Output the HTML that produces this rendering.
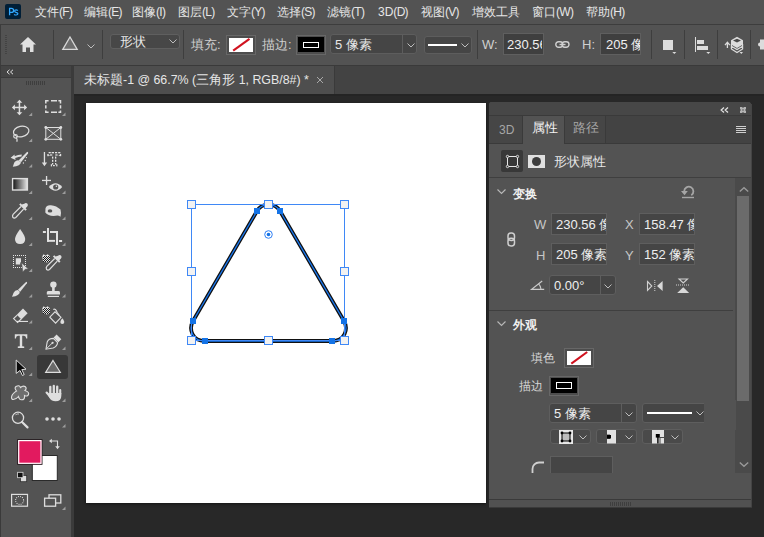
<!DOCTYPE html>
<html><head><meta charset="utf-8">
<style>
*{margin:0;padding:0;box-sizing:border-box}
html,body{width:764px;height:537px;overflow:hidden;background:#282828;font-family:"Liberation Sans",sans-serif;color:#dcdcdc;font-size:12px}
.a{position:absolute}
.t{position:absolute;white-space:nowrap;line-height:1}
svg{position:absolute;overflow:visible}
</style></head><body>

<!-- MENU BAR -->
<div class="a" style="left:0;top:0;width:764px;height:24px;background:#535353"></div>
<div class="a" style="left:0;top:24px;width:764px;height:1px;background:#3d3d3d"></div>
<div class="a" style="left:5px;top:4px;width:16px;height:15px;background:#001e36;border-radius:2px"></div>
<svg style="left:0;top:0" width="24" height="24" viewBox="0 0 24 24"><path d="M9.6 15.2 V8.4 H11.4 Q13.6 8.4 13.6 10.4 Q13.6 12.4 11.4 12.4 H9.6" fill="none" stroke="#31a8ff" stroke-width="1.3"/><path d="M17.8 10.6 Q17.2 9.9 16.1 9.9 Q14.6 9.9 14.6 11 Q14.6 11.9 16.1 12.3 Q17.9 12.7 17.9 13.8 Q17.9 15 16.1 15 Q14.8 15 14.1 14.3" fill="none" stroke="#31a8ff" stroke-width="1.2"/></svg>
<div class="t" id="menu" style="left:35px;top:6px;font-size:12px;color:#e6e6e6">
<span class="t" style="left:0">文件<span style="letter-spacing:-0.7px">(F)</span></span>
<span class="t" style="left:49px">编辑<span style="letter-spacing:-0.7px">(E)</span></span>
<span class="t" style="left:97px">图像<span style="letter-spacing:-0.7px">(I)</span></span>
<span class="t" style="left:143px">图层<span style="letter-spacing:-0.7px">(L)</span></span>
<span class="t" style="left:192px">文字<span style="letter-spacing:-0.7px">(Y)</span></span>
<span class="t" style="left:242px">选择<span style="letter-spacing:-0.7px">(S)</span></span>
<span class="t" style="left:292px">滤镜<span style="letter-spacing:-0.7px">(T)</span></span>
<span class="t" style="left:343px">3D<span style="letter-spacing:-0.7px">(D)</span></span>
<span class="t" style="left:386px">视图<span style="letter-spacing:-0.7px">(V)</span></span>
<span class="t" style="left:437px">增效工具</span>
<span class="t" style="left:497px">窗口<span style="letter-spacing:-0.7px">(W)</span></span>
<span class="t" style="left:551px">帮助<span style="letter-spacing:-0.7px">(H)</span></span>
</div>

<!-- OPTIONS BAR -->
<div class="a" style="left:0;top:25px;width:764px;height:40px;background:#535353"></div>
<div class="a" style="left:0;top:65px;width:764px;height:1px;background:#3a3a3a"></div>
<div class="a" style="left:0;top:25px;width:1px;height:40px;background:#3c3c3c"></div>

<!-- grip -->
<div class="a" style="left:5px;top:35px;width:2px;height:20px;background:repeating-linear-gradient(#434343 0 1px,transparent 1px 2px)"></div>
<!-- home -->
<svg style="left:20px;top:37px" width="16" height="15" viewBox="0 0 16 15"><path d="M8 0 L16 7.5 L13.5 7.5 L13.5 15 L10 15 L10 10.5 L6 10.5 L6 15 L2.5 15 L2.5 7.5 L0 7.5 Z" fill="#e0e0e0"/></svg>
<div class="a" style="left:53px;top:30px;width:1px;height:29px;background:#3e3e3e"></div>
<!-- triangle tool -->
<svg style="left:62px;top:36px" width="16" height="14" viewBox="0 0 16 14"><path d="M8 1 L15.2 13.3 L0.8 13.3 Z" fill="#6e6e6e" stroke="#d8d8d8" stroke-width="1.3" stroke-linejoin="miter"/></svg>
<svg style="left:87px;top:44px" width="8" height="5" viewBox="0 0 8 5"><path d="M0.5 0.5 L4 4 L7.5 0.5" fill="none" stroke="#bdbdbd" stroke-width="1"/></svg>
<div class="a" style="left:102px;top:30px;width:1px;height:29px;background:#3e3e3e"></div>
<!-- shape dropdown -->
<div class="a" style="left:110px;top:34px;width:70px;height:15px;background:#474747;border:1px solid #5f5f5f;border-radius:3px"></div>
<div class="t" style="left:120px;top:35px;font-size:13px;color:#e8e8e8">形状</div>
<svg style="left:169px;top:39px" width="8" height="5" viewBox="0 0 8 5"><path d="M0.5 0.5 L4 4 L7.5 0.5" fill="none" stroke="#bdbdbd" stroke-width="1"/></svg>
<div class="a" style="left:183px;top:30px;width:1px;height:29px;background:#3e3e3e"></div>
<!-- fill -->
<div class="t" style="left:191px;top:38px;font-size:13px;color:#cfcfcf">填充:</div>
<div class="a" style="left:226px;top:35px;width:30px;height:20px;border:1px solid #676767;background:#4d4d4d"></div>
<div class="a" style="left:229px;top:38px;width:24px;height:14px;background:#fff"></div>
<svg style="left:229px;top:38px" width="24" height="14" viewBox="0 0 24 14"><path d="M4.2 12.6 L20.5 0.9" stroke="#d0121f" stroke-width="2.1"/></svg>
<!-- stroke -->
<div class="t" style="left:262px;top:38px;font-size:13px;color:#cfcfcf">描边:</div>
<div class="a" style="left:296px;top:35px;width:30px;height:20px;border:1px solid #676767;background:#4d4d4d"></div>
<div class="a" style="left:298px;top:37px;width:26px;height:15px;background:#000"></div>
<div class="a" style="left:303px;top:42px;width:16px;height:6px;border:1.5px solid #fff"></div>
<!-- stroke size -->
<div class="a" style="left:330px;top:34px;width:87px;height:20px;background:#454545;border:1px solid #5d5d5d;border-radius:3px"></div>
<div class="a" style="left:402px;top:35px;width:1px;height:18px;background:#5d5d5d"></div>
<div class="t" style="left:335px;top:38px;font-size:13px;color:#e8e8e8">5 像素</div>
<svg style="left:407px;top:43px" width="8" height="5" viewBox="0 0 8 5"><path d="M0.5 0.5 L4 4 L7.5 0.5" fill="none" stroke="#bdbdbd" stroke-width="1"/></svg>
<!-- line style -->
<div class="a" style="left:424px;top:36px;width:48px;height:18px;background:#454545;border:1px solid #5d5d5d;border-radius:3px"></div>
<div class="a" style="left:428px;top:44px;width:29px;height:2px;background:#fff"></div>
<svg style="left:461px;top:43px" width="8" height="5" viewBox="0 0 8 5"><path d="M0.5 0.5 L4 4 L7.5 0.5" fill="none" stroke="#bdbdbd" stroke-width="1"/></svg>
<div class="a" style="left:477px;top:30px;width:1px;height:29px;background:#3e3e3e"></div>
<!-- W -->
<div class="t" style="left:482px;top:38px;font-size:13px;color:#cfcfcf">W:</div>
<div class="a" style="left:503px;top:33px;width:41px;height:22px;background:#3f3f3f;border:1px solid #5f5f5f"><div class="a" style="left:0;top:0;width:38px;height:20px;overflow:hidden"><div class="t" style="left:3px;top:4px;font-size:13px;color:#f0f0f0">230.56</div></div></div>
<!-- link -->
<svg style="left:555px;top:41px" width="15" height="7" viewBox="0 0 15 7"><rect x="0.8" y="0.8" width="7" height="5.4" rx="2.7" fill="none" stroke="#d0d0d0" stroke-width="1.4"/><rect x="7" y="0.8" width="7" height="5.4" rx="2.7" fill="none" stroke="#d0d0d0" stroke-width="1.4"/><path d="M4.5 3.5 H10.5" stroke="#d0d0d0" stroke-width="1.4"/></svg>
<!-- H -->
<div class="t" style="left:582px;top:38px;font-size:13px;color:#cfcfcf">H:</div>
<div class="a" style="left:600px;top:33px;width:41px;height:22px;background:#3f3f3f;border:1px solid #5f5f5f"><div class="a" style="left:0;top:0;width:39px;height:20px;overflow:hidden"><div class="t" style="left:5px;top:4px;font-size:13px;color:#f0f0f0">205 像素</div></div></div>
<div class="a" style="left:651px;top:30px;width:1px;height:29px;background:#3e3e3e"></div>
<!-- square icon -->
<div class="a" style="left:663px;top:40px;width:10px;height:10px;background:#dcdcdc"></div>
<svg style="left:672px;top:52px" width="5" height="3" viewBox="0 0 5 3"><path d="M0.3 0 H4.3 L2.3 2 Z" fill="#dcdcdc"/></svg>
<div class="a" style="left:684px;top:30px;width:1px;height:29px;background:#3e3e3e"></div>
<!-- align -->
<div class="a" style="left:695px;top:37px;width:1px;height:15px;background:#dcdcdc"></div>
<div class="a" style="left:697px;top:40px;width:7px;height:4px;background:#dcdcdc"></div>
<div class="a" style="left:697px;top:46px;width:11px;height:4px;background:#dcdcdc"></div>
<svg style="left:706px;top:52px" width="5" height="3" viewBox="0 0 5 3"><path d="M0.3 0 H4.3 L2.3 2 Z" fill="#dcdcdc"/></svg>
<div class="a" style="left:717px;top:30px;width:1px;height:29px;background:#3e3e3e"></div>
<!-- arrange layers -->
<svg style="left:715px;top:30px" width="49" height="30" viewBox="715 30 49 30">
<path d="M727.4 48 V43.2 M725 45.2 L727.4 42.2 L729.8 45.2" fill="none" stroke="#dcdcdc" stroke-width="1.3"/>
<path d="M737 36.8 L743 40.3 V44.5 L737 48 L731 44.5 V40.3 Z" fill="#dcdcdc"/>
<path d="M737 38.8 L741 40.6 L737 42.4 L733 40.6 Z" fill="#4a4a4a"/>
<path d="M731.4 46.2 L737 49.5 L742.6 46.2 M731.4 49 L737 52.5 L742.6 49 M731.4 44 V49.2 M742.6 44 V49.2" fill="none" stroke="#dcdcdc" stroke-width="1.2"/>
<path d="M739.6 52 H743 L741.3 54 Z" fill="#dcdcdc"/>
</svg>
<div class="a" style="left:750px;top:30px;width:1px;height:29px;background:#3e3e3e"></div>
<svg style="left:758px;top:38px" width="6" height="13" viewBox="0 0 6 13"><path d="M2 1.5 H6 V11.5 H2 V8.5 Q0 8.5 0 6.5 Q0 4.5 2 4.5 Z" fill="#dcdcdc"/></svg>

<!-- LEFT TOOL PANEL -->
<div class="a" style="left:0;top:66px;width:71px;height:471px;background:#535353;border-left:1px solid #3a3a3a"></div>
<div class="a" style="left:0;top:66px;width:71px;height:11px;background:#444444;border-left:1px solid #3a3a3a"></div>
<div class="a" style="left:0;top:77px;width:71px;height:1px;background:#3a3a3a"></div>
<div class="a" style="left:71px;top:66px;width:3px;height:471px;background:#3b3b3b"></div>
<svg style="left:6px;top:69px" width="8" height="6" viewBox="0 0 8 6"><path d="M3.5 0.8 L1 3 L3.5 5.2 M7 0.8 L4.5 3 L7 5.2" fill="none" stroke="#e0e0e0" stroke-width="1"/></svg>
<div class="a" style="left:26px;top:81px;width:19px;height:4px;background:repeating-linear-gradient(90deg,#3e3e3e 0 1px,transparent 1px 2px)"></div>

<!-- TAB STRIP -->
<div class="a" style="left:74px;top:66px;width:690px;height:28px;background:#434343"></div>
<div class="a" style="left:74px;top:66px;width:261px;height:28px;background:#4e4e4e;border-right:1px solid #3a3a3a"></div>
<div class="t" style="left:84px;top:73px;font-size:13px;color:#e6e6e6">未标题<span style="font-size:12.4px">-1 @ 66.7% (</span>三角形<span style="font-size:12.4px"> 1, RGB/8#) *</span></div>
<svg style="left:317px;top:77px" width="6" height="6" viewBox="0 0 6 6"><path d="M0 0 L6 6 M6 0 L0 6" stroke="#a8a8a8" stroke-width="1"/></svg>
<div class="a" style="left:74px;top:94px;width:690px;height:2px;background:#242424"></div>

<!-- CANVAS -->
<div class="a" style="left:86px;top:103px;width:400px;height:400px;background:#fff;box-shadow:0 1px 3px rgba(0,0,0,0.5)"></div>

<!-- DOCUMENT SHAPE -->
<svg style="left:0;top:0" width="764" height="537" viewBox="0 0 764 537">
<path d="M257 211 L193 321 C188.5 329 192 341 205 341 L332 341 C345 341 348.5 329 344 321 L280 211 C275 202.5 262 202.5 257 211 Z" fill="none" stroke="#111" stroke-width="3.8"/>
<path d="M257 211 L193 321 C188.5 329 192 341 205 341 L332 341 C345 341 348.5 329 344 321 L280 211 C275 202.5 262 202.5 257 211 Z" fill="none" stroke="#1a78f0" stroke-width="1.3"/>
<rect x="191.5" y="204.5" width="153" height="136" fill="none" stroke="#3f88f6" stroke-width="1"/>
<g fill="#f2f2f2" stroke="#3f88f6" stroke-width="1">
<rect x="187.5" y="200.5" width="8" height="8"/><rect x="264.5" y="200.5" width="8" height="8"/><rect x="340.5" y="200.5" width="8" height="8"/>
<rect x="187.5" y="267.5" width="8" height="8"/><rect x="340.5" y="267.5" width="8" height="8"/>
<rect x="187.5" y="336.5" width="8" height="8"/><rect x="264.5" y="336.5" width="8" height="8"/><rect x="340.5" y="336.5" width="8" height="8"/>
</g>
<g fill="#1473e6">
<rect x="254" y="208" width="6" height="6"/><rect x="277" y="208" width="6" height="6"/>
<rect x="190" y="318" width="6" height="6"/><rect x="341" y="318" width="6" height="6"/>
<rect x="202" y="338" width="6" height="6"/><rect x="329" y="338" width="6" height="6"/>
</g>
<circle cx="268.5" cy="234.5" r="5.5" fill="#fff" opacity="0.9"/>
<circle cx="268.5" cy="234.5" r="3.8" fill="none" stroke="#2f7ff5" stroke-width="1"/>
<circle cx="268.5" cy="234.5" r="1.8" fill="#1473e6"/>
</svg>

<!-- PROPERTIES PANEL -->
<div class="a" style="left:489px;top:102px;width:262px;height:405px;background:#535353;border-radius:3px 3px 0 0;overflow:hidden">
  <div class="a" style="left:0;top:0;width:263px;height:13px;background:#474747"></div>
  <div class="a" style="left:0;top:13px;width:263px;height:1px;background:#3a3a3a"></div>
  <div class="a" style="left:0;top:14px;width:263px;height:27px;background:#434343"></div>
  <div class="a" style="left:0;top:14px;width:33px;height:27px;background:#464646"></div>
  <div class="a" style="left:33px;top:14px;width:1px;height:27px;background:#3a3a3a"></div>
  <div class="a" style="left:34px;top:14px;width:41px;height:28px;background:#535353"></div>
  <div class="a" style="left:75px;top:14px;width:1px;height:27px;background:#3a3a3a"></div>
  <div class="a" style="left:76px;top:14px;width:40px;height:27px;background:#464646"></div>
  <div class="a" style="left:116px;top:14px;width:1px;height:27px;background:#3a3a3a"></div>
  <div class="a" style="left:0;top:41px;width:34px;height:1px;background:#3a3a3a"></div>
  <div class="a" style="left:75px;top:41px;width:188px;height:1px;background:#3a3a3a"></div>
  <div class="t" style="left:10px;top:122px"></div>
</div>
<svg style="left:720px;top:107px" width="9" height="6" viewBox="0 0 9 6"><path d="M4 0.5 L1.2 3 L4 5.5 M8 0.5 L5.2 3 L8 5.5" fill="none" stroke="#e0e0e0" stroke-width="1.3"/></svg>
<svg style="left:740px;top:107px" width="6" height="6" viewBox="0 0 6 6"><path d="M0 0 H2 L3 1 L4 0 H6 V2 L5 3 L6 4 V6 H4 L3 5 L2 6 H0 V4 L1 3 L0 2 Z" fill="#b4b4b4"/><rect x="2" y="2" width="2" height="2" fill="#8a8a8a"/></svg>
<div class="t" style="left:499px;top:124px;font-size:12px;color:#a6a6a6">3D</div>
<div class="t" style="left:532px;top:122px;font-size:12.5px;color:#f4f4f4">属性</div>
<div class="t" style="left:573px;top:122px;font-size:12.5px;color:#a6a6a6">路径</div>
<div class="a" style="left:736px;top:126px;width:10px;height:1px;background:#cfcfcf"></div><div class="a" style="left:736px;top:128px;width:10px;height:1px;background:#cfcfcf"></div><div class="a" style="left:736px;top:130px;width:10px;height:1px;background:#cfcfcf"></div><div class="a" style="left:736px;top:132px;width:10px;height:1px;background:#cfcfcf"></div>

<div class="a" style="left:501px;top:150px;width:22px;height:22px;background:#383838;border-radius:2px"></div>
<svg style="left:506px;top:155px" width="13" height="13" viewBox="0 0 13 13"><rect x="1.5" y="1.5" width="10" height="10" fill="none" stroke="#e6e6e6" stroke-width="1"/><g fill="#383838" stroke="#e6e6e6" stroke-width="0.9"><circle cx="1.5" cy="1.5" r="1.2"/><circle cx="11.5" cy="1.5" r="1.2"/><circle cx="1.5" cy="11.5" r="1.2"/><circle cx="11.5" cy="11.5" r="1.2"/></g></svg>
<div class="a" style="left:528px;top:155px;width:17px;height:13px;background:#e0e0e0"></div>
<div class="a" style="left:532px;top:157px;width:9px;height:9px;background:#3c3c3c;border-radius:50%"></div>
<div class="t" style="left:554px;top:156px;font-size:12.5px;color:#e6e6e6">形状属性</div>
<div class="a" style="left:489px;top:177px;width:262px;height:1px;background:#3f3f3f"></div>

<!-- scrollbar -->
<div class="a" style="left:735px;top:178px;width:16px;height:295px;background:#4a4a4a"></div>
<svg style="left:739px;top:187px" width="10" height="5" viewBox="0 0 10 5"><path d="M0.8 4.5 L5 0.8 L9.2 4.5" fill="none" stroke="#9a9a9a" stroke-width="1.4"/></svg>
<div class="a" style="left:737px;top:196px;width:12px;height:205px;background:#6b6b6b"></div>
<svg style="left:739px;top:462px" width="10" height="5" viewBox="0 0 10 5"><path d="M0.8 0.5 L5 4.2 L9.2 0.5" fill="none" stroke="#9a9a9a" stroke-width="1.4"/></svg>

<!-- TRANSFORM SECTION -->
<svg style="left:497px;top:189px" width="9" height="5" viewBox="0 0 9 5"><path d="M0.5 0.5 L4.5 4.5 L8.5 0.5" fill="none" stroke="#b8b8b8" stroke-width="1.1"/></svg>
<div class="t" style="left:513px;top:188px;font-size:12px;color:#f0f0f0;font-weight:bold">变换</div>
<svg style="left:674px;top:180px" width="28" height="22" viewBox="674 180 28 22"><path d="M684.2 191.3 A4.6 4.6 0 1 1 691.3 195.2" fill="none" stroke="#a6a6a6" stroke-width="1.8"/><path d="M681 191 L687.8 191 L684.5 195.2 Z" fill="#a6a6a6"/><rect x="682" y="196.8" width="12" height="1.4" fill="#a6a6a6"/></svg>

<div class="t" style="left:534px;top:218px;font-size:13px;color:#c6c6c6">W</div>
<div class="a" style="left:551px;top:213px;width:56px;height:22px;background:#454545;border:1px solid #5e5e5e;overflow:hidden"><div class="t" style="left:4px;top:4px;font-size:13px;color:#efefef">230.56 像素</div></div>
<div class="t" style="left:625px;top:218px;font-size:13px;color:#c6c6c6">X</div>
<div class="a" style="left:639px;top:213px;width:56px;height:22px;background:#454545;border:1px solid #5e5e5e;overflow:hidden"><div class="t" style="left:4px;top:4px;font-size:13px;color:#efefef">158.47 像素</div></div>
<svg style="left:507px;top:232px" width="9" height="15" viewBox="0 0 9 15"><rect x="1" y="1" width="6.5" height="7.5" rx="3" fill="none" stroke="#cfcfcf" stroke-width="1.5"/><rect x="1" y="6.2" width="6.5" height="7.8" rx="3" fill="none" stroke="#cfcfcf" stroke-width="1.5"/></svg>
<div class="t" style="left:536px;top:249px;font-size:13px;color:#c6c6c6">H</div>
<div class="a" style="left:551px;top:243px;width:56px;height:22px;background:#454545;border:1px solid #5e5e5e;overflow:hidden"><div class="t" style="left:4px;top:4px;font-size:13px;color:#efefef">205 像素</div></div>
<div class="t" style="left:625px;top:249px;font-size:13px;color:#c6c6c6">Y</div>
<div class="a" style="left:639px;top:243px;width:56px;height:22px;background:#454545;border:1px solid #5e5e5e;overflow:hidden"><div class="t" style="left:4px;top:4px;font-size:13px;color:#efefef">152 像素</div></div>

<svg style="left:526px;top:270px" width="22" height="24" viewBox="526 270 22 24"><path d="M542.2 281 L531.6 289.4 H544.2" fill="none" stroke="#cacaca" stroke-width="1.2"/><path d="M538.6 283.8 Q540.8 285.8 541 289.2" fill="none" stroke="#cacaca" stroke-width="1.1"/></svg>
<div class="a" style="left:549px;top:275px;width:67px;height:20px;background:#454545;border:1px solid #5e5e5e;border-radius:3px"></div>
<div class="a" style="left:600px;top:276px;width:1px;height:18px;background:#5e5e5e"></div>
<div class="t" style="left:554px;top:279px;font-size:13px;color:#efefef">0.00°</div>
<svg style="left:604px;top:284px" width="8" height="5" viewBox="0 0 8 5"><path d="M0.5 0.5 L4 4 L7.5 0.5" fill="none" stroke="#bdbdbd" stroke-width="1"/></svg>
<svg style="left:646px;top:280px" width="18" height="12" viewBox="0 0 18 12"><path d="M1.5 1.5 L5.8 6 L1.5 10.5 Z" fill="none" stroke="#d0d0d0" stroke-width="1.1"/><path d="M8.8 0 V12" stroke="#d0d0d0" stroke-width="1" stroke-dasharray="1 1"/><path d="M16.6 1 L11 6 L16.6 11 Z" fill="#d8d8d8"/></svg>
<svg style="left:676px;top:278px" width="14" height="15" viewBox="0 0 14 15"><path d="M3 1 H11.5 L7.25 5 Z" fill="none" stroke="#d0d0d0" stroke-width="1.1"/><path d="M0 7 H14" stroke="#d0d0d0" stroke-width="1" stroke-dasharray="1 1"/><path d="M1.2 15 L7.25 9.2 L13.2 15 Z" fill="#d8d8d8"/></svg>

<div class="a" style="left:489px;top:310px;width:244px;height:1px;background:#3f3f3f"></div>

<!-- APPEARANCE -->
<svg style="left:497px;top:321px" width="9" height="5" viewBox="0 0 9 5"><path d="M0.5 0.5 L4.5 4.5 L8.5 0.5" fill="none" stroke="#b8b8b8" stroke-width="1.1"/></svg>
<div class="t" style="left:513px;top:319px;font-size:12px;color:#f0f0f0;font-weight:bold">外观</div>
<div class="t" style="left:531px;top:352px;font-size:12px;color:#d6d6d6">填色</div>
<div class="a" style="left:564px;top:348px;width:30px;height:20px;border:1px solid #676767;background:#4d4d4d"></div>
<div class="a" style="left:567px;top:351px;width:24px;height:14px;background:#fff"></div>
<svg style="left:567px;top:351px" width="24" height="14" viewBox="0 0 24 14"><path d="M4.3 12.6 L20.2 1" stroke="#d0121f" stroke-width="2.1"/></svg>
<div class="t" style="left:519px;top:380px;font-size:12px;color:#d6d6d6">描边</div>
<div class="a" style="left:549px;top:376px;width:30px;height:20px;border:1px solid #676767;background:#4d4d4d"></div>
<div class="a" style="left:551px;top:378px;width:26px;height:15px;background:#000"></div>
<div class="a" style="left:556px;top:382px;width:16px;height:7px;border:1.5px solid #fff"></div>

<div class="a" style="left:549px;top:403px;width:88px;height:20px;background:#454545;border:1px solid #5e5e5e;border-radius:3px"></div>
<div class="a" style="left:621px;top:404px;width:1px;height:19px;background:#5e5e5e"></div>
<div class="t" style="left:554px;top:407px;font-size:13px;color:#efefef">5 像素</div>
<svg style="left:625px;top:412px" width="8" height="5" viewBox="0 0 8 5"><path d="M0.5 0.5 L4 4 L7.5 0.5" fill="none" stroke="#bdbdbd" stroke-width="1"/></svg>
<div class="a" style="left:642px;top:403px;width:70px;height:20px;background:#454545;border:1px solid #5e5e5e;border-radius:3px"></div>
<div class="a" style="left:647px;top:412px;width:45px;height:2px;background:#fff"></div>
<svg style="left:696px;top:411px" width="8" height="5" viewBox="0 0 8 5"><path d="M0.5 0.5 L4 4 L7.5 0.5" fill="none" stroke="#bdbdbd" stroke-width="1"/></svg>
<div class="a" style="left:704px;top:400px;width:32px;height:30px;background:#535353"></div>

<div class="a" style="left:550px;top:429px;width:41px;height:15px;background:#4a4a4a;border:1px solid #5e5e5e;border-radius:3px"></div>
<svg style="left:559px;top:430px" width="14" height="14" viewBox="0 0 14 14"><rect x="0" y="0" width="14" height="14" fill="#e8e8e8"/><rect x="3" y="3" width="8" height="8" fill="#bdbdbd" stroke="#000" stroke-width="1"/><g fill="#000"><circle cx="3" cy="3" r="1.4"/><circle cx="11" cy="3" r="1.4"/><circle cx="3" cy="11" r="1.4"/><circle cx="11" cy="11" r="1.4"/></g></svg>
<svg style="left:579px;top:435px" width="8" height="5" viewBox="0 0 8 5"><path d="M0.5 0.5 L4 4 L7.5 0.5" fill="none" stroke="#bdbdbd" stroke-width="1"/></svg>
<div class="a" style="left:596px;top:429px;width:41px;height:15px;background:#4a4a4a;border:1px solid #5e5e5e;border-radius:3px"></div>
<svg style="left:606px;top:430px" width="11" height="14" viewBox="0 0 11 14"><path d="M1 0 H10 V13.5 H1 V9 H4 V4.5 H1 Z" fill="#e2e2e2"/><rect x="1" y="5" width="4" height="3.5" fill="#000"/></svg>
<svg style="left:625px;top:435px" width="8" height="5" viewBox="0 0 8 5"><path d="M0.5 0.5 L4 4 L7.5 0.5" fill="none" stroke="#bdbdbd" stroke-width="1"/></svg>
<div class="a" style="left:642px;top:429px;width:41px;height:15px;background:#4a4a4a;border:1px solid #5e5e5e;border-radius:3px"></div>
<svg style="left:652px;top:430px" width="13" height="14" viewBox="0 0 13 14"><path d="M0 0 H12 V7 H7.5 V13.5 H0 Z" fill="#e2e2e2"/><rect x="8.5" y="8" width="3.5" height="5.5" fill="#e2e2e2"/><rect x="3.8" y="4" width="4" height="3.6" fill="#000"/><rect x="5.2" y="7" width="1.4" height="6.5" fill="#000"/></svg>
<svg style="left:671px;top:435px" width="8" height="5" viewBox="0 0 8 5"><path d="M0.5 0.5 L4 4 L7.5 0.5" fill="none" stroke="#bdbdbd" stroke-width="1"/></svg>

<svg style="left:531px;top:461px" width="14" height="12" viewBox="0 0 14 12"><path d="M1.5 12 V8 A6.5 6.5 0 0 1 8 1.5 H13" fill="none" stroke="#d0d0d0" stroke-width="1.8"/></svg>
<div class="a" style="left:550px;top:456px;width:63px;height:18px;background:#454545;border:1px solid #5e5e5e;border-bottom:none"></div>
<div class="a" style="left:489px;top:473px;width:246px;height:26px;background:#535353"></div>
<div class="a" style="left:489px;top:499px;width:262px;height:1px;background:#3a3a3a"></div>
<div class="a" style="left:489px;top:500px;width:262px;height:7px;background:#515151"></div>
<div class="a" style="left:751px;top:104px;width:1px;height:404px;background:#444"></div>
<div class="a" style="left:489px;top:507px;width:263px;height:1px;background:#3a3a3a"></div>
<div class="a" style="left:610px;top:502px;width:21px;height:4px;background:repeating-linear-gradient(90deg,#3e3e3e 0 1px,transparent 1px 2px)"></div>

<!-- TOOLS -->
<div class="a" style="left:37px;top:355px;width:31px;height:24px;background:#383838;border-radius:3px"></div>
<svg style="left:0;top:0" width="72" height="537" viewBox="0 0 72 537">
<path d="M28.7 116 L32.2 112.5 L32.2 116 Z" fill="#9c9c9c"/><path d="M62 116 L65.5 112.5 L65.5 116 Z" fill="#9c9c9c"/><path d="M28.7 142 L32.2 138.5 L32.2 142 Z" fill="#9c9c9c"/><path d="M28.7 167.5 L32.2 164.0 L32.2 167.5 Z" fill="#9c9c9c"/><path d="M62 167.5 L65.5 164.0 L65.5 167.5 Z" fill="#9c9c9c"/><path d="M28.7 194 L32.2 190.5 L32.2 194 Z" fill="#9c9c9c"/><path d="M62 194 L65.5 190.5 L65.5 194 Z" fill="#9c9c9c"/><path d="M28.7 220 L32.2 216.5 L32.2 220 Z" fill="#9c9c9c"/><path d="M62 220 L65.5 216.5 L65.5 220 Z" fill="#9c9c9c"/><path d="M28.7 246 L32.2 242.5 L32.2 246 Z" fill="#9c9c9c"/><path d="M62 246 L65.5 242.5 L65.5 246 Z" fill="#9c9c9c"/><path d="M28.7 272 L32.2 268.5 L32.2 272 Z" fill="#9c9c9c"/><path d="M28.7 297.5 L32.2 294.0 L32.2 297.5 Z" fill="#9c9c9c"/><path d="M62 297.5 L65.5 294.0 L65.5 297.5 Z" fill="#9c9c9c"/><path d="M28.7 323.5 L32.2 320.0 L32.2 323.5 Z" fill="#9c9c9c"/><path d="M28.7 350 L32.2 346.5 L32.2 350 Z" fill="#9c9c9c"/><path d="M62 350 L65.5 346.5 L65.5 350 Z" fill="#9c9c9c"/><path d="M28.7 376 L32.2 372.5 L32.2 376 Z" fill="#9c9c9c"/><path d="M28.7 402 L32.2 398.5 L32.2 402 Z" fill="#9c9c9c"/><path d="M62 402 L65.5 398.5 L65.5 402 Z" fill="#9c9c9c"/><path d="M62 427.5 L65.5 424.0 L65.5 427.5 Z" fill="#9c9c9c"/><path d="M62 510 L65.5 506.5 L65.5 510 Z" fill="#9c9c9c"/>
<!-- move -->
<g fill="#dedede" stroke="none">
<rect x="18.7" y="101" width="1.5" height="13"/><rect x="13" y="106.7" width="13" height="1.5"/>
<path d="M19.45 99.8 L22.3 102.8 L16.6 102.8 Z"/><path d="M19.45 115.2 L22.3 112.2 L16.6 112.2 Z"/>
<path d="M11.9 107.45 L14.9 104.6 L14.9 110.3 Z"/><path d="M27.1 107.45 L24.1 104.6 L24.1 110.3 Z"/>
</g>
<!-- marquee -->
<path d="M45.8 103.4 V100.8 H48.6 M51 100.8 H57 M58.4 100.8 H60.5 V103.4 M60.5 105.3 V108.6 M60.5 110.4 V112.3 H58.4 M57 112.3 H51 M48.6 112.3 H45.8 V110.4 M45.8 108.6 V105.3" fill="none" stroke="#dedede" stroke-width="1.5"/>
<!-- lasso -->
<g fill="none" stroke="#dedede" stroke-width="1.2">
<ellipse cx="21.2" cy="131.5" rx="7.8" ry="5.3" transform="rotate(-12 21.2 131.5)"/>
<circle cx="15.5" cy="136.3" r="1.8"/><path d="M16.5 137.8 Q17.5 140 16.8 141.8"/>
</g>
<!-- frame -->
<g stroke="#dedede" stroke-width="1" fill="#5a5a5a">
<rect x="45.8" y="127.5" width="15" height="11.8"/>
<path d="M45.8 127.5 L60.8 139.3 M60.8 127.5 L45.8 139.3" fill="none"/>
</g>
<g fill="#dedede"><circle cx="45.8" cy="127.5" r="1.4"/><circle cx="60.8" cy="127.5" r="1.4"/><circle cx="45.8" cy="139.3" r="1.4"/><circle cx="60.8" cy="139.3" r="1.4"/></g>
<!-- history brush -->
<g fill="#dedede">
<path d="M27.2 151.8 Q28.6 152.2 28 153.4 L21 162.2 L18.6 160.4 Z"/>
<path d="M18.3 160.3 Q15 160.5 13.9 163.4 Q13.3 165.2 12.8 166.8 Q16.6 166.6 18.8 165.2 Q21 163.8 20.9 162.3 Z"/>
<path d="M10.6 157.8 L14.6 154.6 L14.6 156.2 Q18 154.6 21.8 154.6 L21.5 156.4 Q18.4 156.4 15.2 158 L15.6 160 Z"/>
<circle cx="26.4" cy="157.6" r="0.65"/><circle cx="25.3" cy="160.5" r="0.65"/><circle cx="23.4" cy="163" r="0.65"/>
</g>
<!-- vertical type mask -->
<g fill="#dedede"><rect x="43.8" y="152" width="1.3" height="11.5"/><path d="M41.8 162.6 L47.1 162.6 L44.45 166.2 Z"/></g>
<g fill="#e2e2e2"><rect x="48.6" y="152" width="2.2" height="1.3"/><rect x="51.6" y="152" width="2.4" height="1.3"/><rect x="55" y="152" width="2.2" height="1.3"/><rect x="58.2" y="152" width="2.2" height="1.3"/><rect x="47.3" y="154" width="1.4" height="2.2"/><rect x="48.5" y="155" width="1" height="1"/><rect x="59.8" y="154" width="1.4" height="2.2"/><rect x="58.8" y="155" width="1" height="1"/><rect x="50" y="154.4" width="2.3" height="1.2"/><rect x="55.3" y="154.4" width="2.3" height="1.2"/><rect x="52" y="156.6" width="1.3" height="2"/><rect x="52" y="159.8" width="1.3" height="2"/><rect x="52" y="163" width="1.3" height="1.6"/><rect x="55" y="156.6" width="1.3" height="2"/><rect x="55" y="159.8" width="1.3" height="2"/><rect x="55" y="163" width="1.3" height="1.6"/><rect x="50.8" y="164.2" width="1.2" height="2.2"/><rect x="53" y="165" width="1.8" height="1.2"/><rect x="56.2" y="164.2" width="1.2" height="2.2"/></g>
<!-- gradient -->
<defs><linearGradient id="gr" x1="0" x2="1"><stop offset="0" stop-color="#111"/><stop offset="1" stop-color="#e6e6e6"/></linearGradient></defs>
<rect x="12.6" y="178.6" width="14.8" height="11.4" fill="url(#gr)" stroke="#dedede" stroke-width="1.4"/>
<!-- add anchor eye -->
<g fill="#dedede"><rect x="42" y="179.8" width="9" height="1.3"/><rect x="45.9" y="176" width="1.3" height="9"/></g>
<path d="M48.8 187 Q55.5 179.5 62.2 187 Q55.5 194.5 48.8 187 Z" fill="#dedede"/>
<circle cx="55.7" cy="187" r="2.6" fill="#535353"/><circle cx="56.4" cy="186.3" r="0.8" fill="#dedede"/>
<!-- eyedropper -->
<g fill="#dedede">
<path d="M24.3 203.8 Q25.8 202.3 27.3 203.5 Q28.6 205 27.3 206.5 L25.6 208.2 L26.8 209.4 L25.4 210.8 L19.2 204.6 L20.6 203.2 L21.8 204.4 Z"/>
</g>
<path d="M21 206.5 L13.1 214.4 Q12 215.8 12.9 217.5 Q14.3 218.6 15.8 217.5 L23.6 209.1" fill="none" stroke="#dedede" stroke-width="1.2"/>
<!-- patch -->
<path d="M45.5 208.2 Q46.5 204.7 51 205.2 Q56.5 205.8 60.5 209.5 Q61.5 212.8 60.5 216.7 Q58.2 214.8 55.5 215.8 Q48.5 216.5 45.3 212.5 Z" fill="#dedede"/>
<ellipse cx="50" cy="210.9" rx="2.3" ry="1.6" fill="#535353"/>
<!-- blur drop -->
<path d="M20.1 229 Q25.2 236 25.2 239 Q25.2 244 20.1 244 Q15 244 15 239 Q15 236 20.1 229 Z" fill="#dedede"/>
<!-- crop -->
<g fill="#e2e2e2">
<rect x="42.9" y="231" width="3" height="2"/>
<rect x="47" y="228" width="2" height="13.8"/><rect x="47" y="239.9" width="8" height="1.9"/>
<rect x="50" y="231" width="8" height="2"/><rect x="56" y="231" width="2" height="14"/>
<rect x="59" y="240" width="3.1" height="2"/>
</g>
<!-- object selection -->
<g fill="#e6e6e6"><rect x="13" y="255" width="1" height="1"/><rect x="13" y="267" width="1" height="1"/><rect x="15" y="255" width="1" height="1"/><rect x="15" y="267" width="1" height="1"/><rect x="17" y="255" width="1" height="1"/><rect x="17" y="267" width="1" height="1"/><rect x="19" y="255" width="1" height="1"/><rect x="19" y="267" width="1" height="1"/><rect x="21" y="255" width="1" height="1"/><rect x="21" y="267" width="1" height="1"/><rect x="23" y="255" width="1" height="1"/><rect x="23" y="267" width="1" height="1"/><rect x="25" y="255" width="1" height="1"/><rect x="25" y="267" width="1" height="1"/><rect x="13" y="257" width="1" height="1"/><rect x="25" y="257" width="1" height="1"/><rect x="13" y="259" width="1" height="1"/><rect x="25" y="259" width="1" height="1"/><rect x="13" y="261" width="1" height="1"/><rect x="25" y="261" width="1" height="1"/><rect x="13" y="263" width="1" height="1"/><rect x="25" y="263" width="1" height="1"/><rect x="13" y="265" width="1" height="1"/><rect x="25" y="265" width="1" height="1"/></g>
<path d="M15.8 258.2 H21 V262.2 L20.2 262.6 V264.4 H15.8 Z" fill="#dedede"/>
<path d="M21.6 262.8 L28.4 269 L25.2 269.3 L22.8 272 Z" fill="#dedede" stroke="#535353" stroke-width="0.6"/>
<!-- color sampler -->
<path d="M42.3 256.2 L43.6 254.2 L45.6 255.8 L47.6 254.2 L49.9 256.2 L49.9 261.2 L47 262.6 L43 261.2 Z" fill="#e6e6e6"/><g fill="#1a1a1a"><rect x="44" y="256" width="1" height="1"/><rect x="46" y="256" width="1" height="1"/><rect x="48" y="256" width="1" height="1"/><rect x="43" y="257" width="1" height="1"/><rect x="45" y="257" width="1" height="1"/><rect x="47" y="257" width="1" height="1"/><rect x="49" y="257" width="1" height="1"/><rect x="44" y="258" width="1" height="1"/><rect x="46" y="258" width="1" height="1"/><rect x="48" y="258" width="1" height="1"/><rect x="43" y="259" width="1" height="1"/><rect x="45" y="259" width="1" height="1"/><rect x="47" y="259" width="1" height="1"/><rect x="49" y="259" width="1" height="1"/><rect x="44" y="260" width="1" height="1"/><rect x="46" y="260" width="1" height="1"/><rect x="48" y="260" width="1" height="1"/><rect x="43" y="261" width="1" height="1"/><rect x="45" y="261" width="1" height="1"/><rect x="47" y="261" width="1" height="1"/><rect x="49" y="261" width="1" height="1"/></g>
<path d="M58 255.8 Q59.5 254.3 61 255.5 Q62.3 257 61 258.5 L59.3 260.2 L60.5 261.4 L59.1 262.8 L52.9 256.6 L54.3 255.2 L55.5 256.4 Z" fill="#dedede"/>
<path d="M54.7 258.5 L46.8 266.4 Q45.7 267.8 46.6 269.5 Q48 270.6 49.5 269.5 L57.3 261.1" fill="none" stroke="#dedede" stroke-width="1.2"/>
<!-- brush -->
<g fill="#dedede">
<path d="M26.3 281.7 Q27.6 282 26.9 283.2 L20.2 291.7 L18 289.8 Z"/>
<path d="M17.8 290 Q14.8 290 13.6 292.8 Q12.8 295 12 296.8 Q15.8 296.4 17.8 295 Q20 293.5 19.8 291.7 Z"/>
</g>
<!-- stamp -->
<g fill="#dedede">
<circle cx="53.4" cy="284.6" r="3.2"/><rect x="52.1" y="286.5" width="2.6" height="4.5"/>
<path d="M46.8 294.6 V292.4 Q46.8 291 48.6 291 H58.2 Q60 291 60 292.4 V294.6 Z"/>
<rect x="47.8" y="295.8" width="11.2" height="1.2"/>
</g>
<!-- eraser -->
<path d="M23 308.6 L27.6 313.2 L21.4 319.4 L16.8 314.8 Z" fill="#dedede"/>
<path d="M17.2 315.2 L13.6 318.6 L17.6 322.4 L21.2 319" fill="none" stroke="#dedede" stroke-width="1.1"/>
<rect x="17" y="320.9" width="11" height="1.1" fill="#dedede"/>
<!-- bucket -->
<path d="M42.3 308.2 L43.6 306.2 L45.6 307.8 L47.6 306.2 L49.9 308.2 L49.9 313.2 L47 314.6 L43 313.2 Z" fill="#e6e6e6"/><g fill="#1a1a1a"><rect x="44" y="308" width="1" height="1"/><rect x="46" y="308" width="1" height="1"/><rect x="48" y="308" width="1" height="1"/><rect x="43" y="309" width="1" height="1"/><rect x="45" y="309" width="1" height="1"/><rect x="47" y="309" width="1" height="1"/><rect x="49" y="309" width="1" height="1"/><rect x="44" y="310" width="1" height="1"/><rect x="46" y="310" width="1" height="1"/><rect x="48" y="310" width="1" height="1"/><rect x="43" y="311" width="1" height="1"/><rect x="45" y="311" width="1" height="1"/><rect x="47" y="311" width="1" height="1"/><rect x="49" y="311" width="1" height="1"/><rect x="44" y="312" width="1" height="1"/><rect x="46" y="312" width="1" height="1"/><rect x="48" y="312" width="1" height="1"/><rect x="43" y="313" width="1" height="1"/><rect x="45" y="313" width="1" height="1"/><rect x="47" y="313" width="1" height="1"/><rect x="49" y="313" width="1" height="1"/></g>
<path d="M49.8 317.2 L55 311.8 L61 317.3 L55.6 323.2 Z" fill="none" stroke="#dedede" stroke-width="1.1"/>
<path d="M53.3 309.5 Q55.5 308 57.2 312.5 L59.5 315.5" fill="none" stroke="#dedede" stroke-width="1.1"/>
<path d="M62.3 318.3 Q64.3 320.5 64.3 322 Q64.3 324 62.3 324 Q60.3 324 60.3 322 Q60.3 320.5 62.3 318.3 Z" fill="#dedede"/>
<!-- type T -->
<path d="M14.8 334.2 H27.3 V338.4 H26.2 Q26 335.8 24 335.8 H22.2 V346.3 L24.2 346.6 V348 H17.8 V346.6 L19.8 346.3 V335.8 H18 Q16 335.8 15.9 338.4 H14.8 Z" fill="#dedede"/>
<!-- pen -->
<g>
<path d="M56.6 334.5 L61.3 339.2 L58.3 342.2 L53.6 337.5 Z" fill="#dedede"/>
<path d="M53.4 338.4 L57.6 342.6 Q57 346.5 53.2 348 L46 349.2 L47.2 342 Q48.6 338.4 53.4 338.4 Z" fill="none" stroke="#dedede" stroke-width="1.1"/>
<path d="M46.4 348.8 L52 343.3" stroke="#dedede" stroke-width="1"/><circle cx="52.6" cy="342.8" r="1.1" fill="#dedede"/>
</g>
<!-- path selection arrow -->
<path d="M16.2 360 L26 369.2 L21.8 369.6 L24.2 374.6 L22.4 375.5 L20 370.5 L16.2 373.4 Z" fill="#0a0a0a" stroke="#dedede" stroke-width="1"/>
<!-- triangle tool selected -->
<path d="M53 360.5 L60.3 372.3 L45.7 372.3 Z" fill="#6a6a6a" stroke="#dedede" stroke-width="1.2"/>
<!-- custom shape -->
<path d="M16 386.5 Q19.5 384.5 20.5 387.5 Q23 385.2 25.5 386.8 Q27 388.5 25 390.5 Q29.5 392 28.5 394.5 Q27.5 397 24.5 395.5 Q25 400 21.5 399.8 Q19 399.5 18.5 396.5 Q15.5 400 12.5 399.5 Q10.5 398 12.5 394.5 Q14.5 392 16.5 391 Q14 388 16 386.5 Z" fill="#6e6e6e" stroke="#dedede" stroke-width="1.1"/>
<!-- hand -->
<g stroke="#dedede" stroke-linecap="round" fill="none">
<path d="M50.3 394 V387" stroke-width="2.3"/><path d="M53.8 393 V385.9" stroke-width="2.3"/><path d="M57.2 393 V386.6" stroke-width="2.3"/><path d="M60.2 394 V390" stroke-width="2.1"/>
<path d="M46.6 392.6 L50.5 397" stroke-width="2.2"/>
</g>
<path d="M49 393 H61.3 V396 Q61.3 401.3 55.5 401.3 Q51.5 401.3 49.5 398 L47.5 394.5 Z" fill="#dedede"/>
<!-- zoom -->
<circle cx="18" cy="417.8" r="5.6" fill="none" stroke="#dedede" stroke-width="1.3"/>
<path d="M22 422 L27.5 427.4" stroke="#dedede" stroke-width="2.2" stroke-linecap="round"/>
<path d="M15.5 414.8 Q17 413.6 19 414" fill="none" stroke="#dedede" stroke-width="0.8"/>
<!-- dots -->
<g fill="#dedede"><circle cx="47" cy="419" r="1.8"/><circle cx="53" cy="419" r="1.8"/><circle cx="59" cy="419" r="1.8"/></g>
<!-- swatches -->
<rect x="32.3" y="455.5" width="25" height="25" fill="#fff" stroke="#2a2a2a" stroke-width="1"/>
<rect x="17.7" y="439.6" width="24.3" height="24.7" fill="#e21a5f" stroke="#202020" stroke-width="1"/>
<rect x="18.7" y="440.6" width="22.3" height="22.7" fill="none" stroke="#fff" stroke-width="1.2"/>
<!-- swap -->
<g fill="none" stroke="#dedede" stroke-width="1.1"><path d="M50.5 441 H57.5 V447.5"/></g>
<g fill="#dedede"><path d="M49 441 L51.8 438.7 V443.3 Z"/><path d="M57.5 449.2 L55.2 446.3 H59.8 Z"/></g>
<!-- default colors -->
<rect x="20.4" y="475.4" width="6.3" height="6.3" fill="#dcdcdc" stroke="#333" stroke-width="0.8"/>
<rect x="17.6" y="472.3" width="5.4" height="5.4" fill="#111" stroke="#ddd" stroke-width="0.8"/>
<!-- quick mask -->
<rect x="11.6" y="494.4" width="15.9" height="11.8" fill="none" stroke="#dedede" stroke-width="1.2"/>
<circle cx="19.6" cy="500.4" r="4" fill="none" stroke="#dedede" stroke-width="1.1" stroke-dasharray="0.9 1.2"/>
<!-- screen mode -->
<rect x="49" y="494.8" width="11.8" height="8.2" fill="none" stroke="#dedede" stroke-width="1.3"/>
<rect x="44.6" y="498.2" width="11" height="8" fill="#535353" stroke="#dedede" stroke-width="1.3"/>
</svg>
</body></html>
